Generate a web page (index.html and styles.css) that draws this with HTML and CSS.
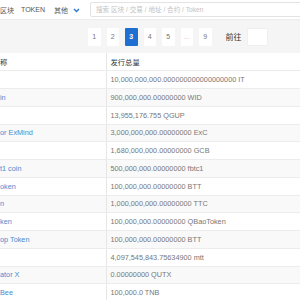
FILE: index.html
```html
<!DOCTYPE html>
<html lang="zh">

<head>
    <meta charset="utf-8">
    <title>Token 列表</title>
    <link rel="stylesheet" href="styles.css">
</head>

<body>
    <div class="topbar">
        <div class="nav">
            <a href="#">区块</a>
            <a href="#">TOKEN</a>
            <a href="#" class="more">其他
                <svg width="7" height="5" viewBox="0 0 7 5"><polyline points="1,1 3.5,3.5 6,1" fill="none" stroke="#2a78d4" stroke-width="1.4"/></svg>
            </a>
        </div>
        <div class="search">
            <input type="text" placeholder="搜索 区块 / 交易 / 地址 / 合约 / Token">
        </div>
    </div>

    <div class="pager_bar">
        <ul class="pager">
            <li>1</li>
            <li>2</li>
            <li class="active">3</li>
            <li>4</li>
            <li>5</li>
            <li class="dots">...</li>
            <li>9</li>
        </ul>
        <span class="goto">前往</span>
        <input type="text" class="goto_input">
    </div>

    <table class="tokens">
        <thead>
            <tr><th class="name">称</th><th>发行总量</th></tr>
        </thead>
        <tbody>
            <tr><td class="name"></td><td>10,000,000,000.000000000000000000 IT</td></tr>
            <tr><td class="name"><a href="#">in</a></td><td>900,000,000.00000000 WID</td></tr>
            <tr><td class="name"></td><td>13,955,176.755 QGUP</td></tr>
            <tr><td class="name"><a href="#">or ExMind</a></td><td>3,000,000,000.00000000 ExC</td></tr>
            <tr><td class="name"></td><td>1,680,000,000.00000000 GCB</td></tr>
            <tr><td class="name"><a href="#">t1 coin</a></td><td>500,000,000.00000000 fbtc1</td></tr>
            <tr><td class="name"><a href="#">oken</a></td><td>100,000,000.00000000 BTT</td></tr>
            <tr><td class="name"><a href="#">n</a></td><td>1,000,000,000.00000000 TTC</td></tr>
            <tr><td class="name"><a href="#">ken</a></td><td>100,000,000.00000000 QBaoToken</td></tr>
            <tr><td class="name"><a href="#">op Token</a></td><td>100,000,000.00000000 BTT</td></tr>
            <tr><td class="name"></td><td>4,097,545,843.75634900 mtt</td></tr>
            <tr><td class="name"><a href="#">ator X</a></td><td>0.00000000 QUTX</td></tr>
            <tr><td class="name"><a href="#">Bee</a></td><td>100,000.0 TNB</td></tr>
        </tbody>
    </table>
</body>

</html>
```

FILE: styles.css
```css
/* 页面基础 */
body {
    margin: 0;
    width: 300px;
    overflow: hidden;
    background: #f5f5f6;
    font-family: "Liberation Sans", "Noto Sans CJK SC", sans-serif;
    color: #777;
}

a {
    text-decoration: none;
}

/* 顶部导航 */
.topbar {
    display: flex;
    align-items: center;
    height: 20px;
    background: #fff;
    border-bottom: 1px solid #ececec;
    box-sizing: border-box;
}

.nav {
    display: flex;
    align-items: center;
    flex-shrink: 0;
    width: 90px;
}

.nav a {
    font-size: 7px;
    color: #555;
    white-space: nowrap;
    margin-right: 9px;
}

.nav a:first-child {
    margin-right: 7px;
}

.nav .more svg {
    margin-left: 3px;
    vertical-align: middle;
}

.search {
    flex: 1;
}

.search input {
    display: block;
    width: 220px;
    height: 15px;
    box-sizing: border-box;
    border: 1px solid #e3e3e3;
    border-radius: 2px;
    padding: 0 5px;
    font-family: inherit;
    font-size: 6.6px;
    outline: none;
}

.search input::placeholder {
    color: #c2c2c2;
}

/* 分页 */
.pager_bar {
    display: flex;
    align-items: center;
    height: 33px;
    padding-left: 88px;
}

.pager {
    display: flex;
    gap: 6px;
    list-style: none;
    margin: 0;
    padding: 0;
}

.pager li {
    width: 12.5px;
    height: 18px;
    line-height: 18px;
    text-align: center;
    font-size: 7px;
    color: #777;
    background: #fff;
    border-radius: 1px;
}

.pager li.active {
    background: #1f6fd0;
    color: #fff;
    font-weight: bold;
}

.pager li.dots {
    color: #bbb;
}

.goto {
    margin-left: 14px;
    font-size: 8px;
    color: #333;
}

.goto_input {
    width: 21px;
    height: 18px;
    margin-left: 5px;
    box-sizing: border-box;
    border: 1px solid #f0f0f0;
    background: #fff;
    padding: 0;
}

/* 表格 */
.tokens {
    width: 100%;
    border-collapse: collapse;
    background: #fff;
    font-size: 7.3px;
}

.tokens th,
.tokens td {
    height: 17.75px;
    padding: 0 0 0 4px;
    text-align: left;
    white-space: nowrap;
    border-bottom: 1px solid #ececec;
    box-sizing: border-box;
}

.tokens th {
    font-weight: normal;
    color: #333;
}

.tokens .name {
    width: 106px;
    padding-left: 0;
    border-right: 1px solid #e6e6e6;
    box-sizing: border-box;
}

.tokens tbody tr:nth-child(even) {
    background: #f9f9f9;
}

.tokens .name a {
    color: #4a8ccf;
}
```
